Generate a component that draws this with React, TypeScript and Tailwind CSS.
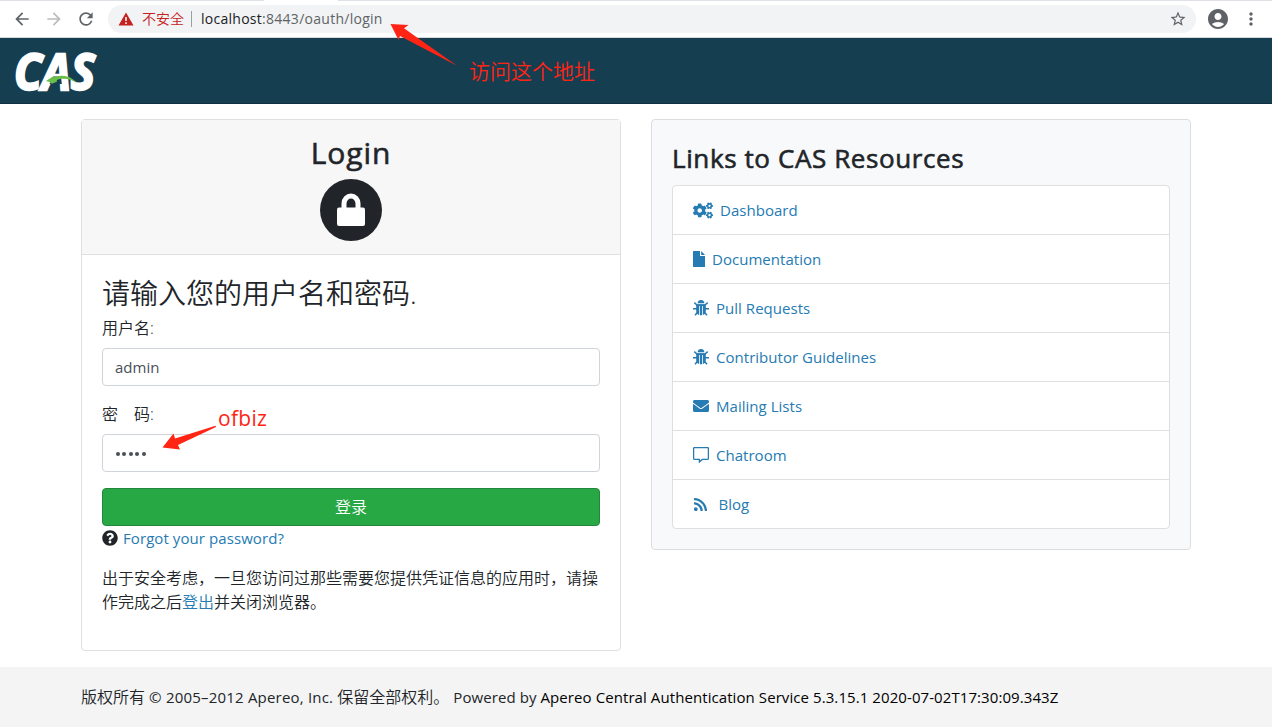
import type { ReactNode } from "react";
import { FaCogs, FaEnvelope, FaQuestionCircle, FaRss } from "react-icons/fa";
import { MdAccountCircle, MdArrowBack, MdArrowForward, MdMoreVert, MdRefresh, MdStarBorder } from "react-icons/md";

function FileIcon() {
  return (
    <svg width="12" height="16" viewBox="0 0 12 16" fill="currentColor">
      <path d="M0 .6Q0 0 .6 0H7v4.400q0 .6.6.6H12v10.400q0 .6-.6.6H.6Q0 16 0 15.400zM8.200 0l3.800 4H8.200z" />
    </svg>
  );
}

function BugIcon() {
  return (
    <svg width="16" height="16" viewBox="0 0 16 16">
      <path d="M4.600 3.200Q5 0 8 0t3.400 3.200z" fill="currentColor" />
      <path
        d="M1.300 2.600L4 5h8l2.700-2.400M0 8.700h16M2 15.300l2.600-3M14 15.300l-2.600-3"
        fill="none"
        stroke="currentColor"
        strokeWidth="1.500"
      />
      <path d="M3.200 4.400h9.600V11q0 4-4.100 4.200H7.300Q3.200 15 3.200 11z" fill="currentColor" />
      <path d="M6.500 6v9M9.500 6v9" stroke="#fff" strokeWidth=".8" />
    </svg>
  );
}

function ChatIcon() {
  return (
    <svg width="16" height="16" viewBox="0 0 16 16" fill="none" stroke="currentColor" strokeWidth="1.300">
      <path d="M1.600.6h12.800q1 0 1 1v9.800q0 1-1 1H9.200L6.400 15v-2.600H1.600q-1 0-1-1V1.600q0-1 1-1z" />
    </svg>
  );
}

function CasLogo() {
  return (
    <svg width="110" height="66" viewBox="0 0 110 66" className="block overflow-visible">
      <text
        x="14"
        y="51.500"
        textLength="81"
        lengthAdjust="spacingAndGlyphs"
        fill="#fff"
        stroke="#fff"
        strokeWidth="2.400"
        className="font-['Open_Sans',sans-serif] text-[50px] font-bold italic"
      >
        CAS
      </text>
      <path d="M54 38.500h7l.8 7.500H49.500z" fill="#153e50" />
      <path d="M46 43l8-5.200.6 1.400q13-4.500 22.500 6-10-6.500-20.500-3.300l.6 1.600-5.200 2.200q-2-2-6-2.700z" fill="#6abf4b" />
    </svg>
  );
}

const links: { label: string; icon: ReactNode; gap: string }[] = [
  { label: "Dashboard", icon: <FaCogs className="h-[17px] w-[20px]" />, gap: "gap-[7px]" },
  { label: "Documentation", icon: <FileIcon />, gap: "gap-[7px]" },
  { label: "Pull Requests", icon: <BugIcon />, gap: "gap-[7px]" },
  { label: "Contributor Guidelines", icon: <BugIcon />, gap: "gap-[7px]" },
  { label: "Mailing Lists", icon: <FaEnvelope className="size-4" />, gap: "gap-[7px]" },
  { label: "Chatroom", icon: <ChatIcon />, gap: "gap-[7px]" },
  { label: "Blog", icon: <FaRss className="size-[15px]" />, gap: "gap-[10.500px]" },
];

function BrowserBar() {
  return (
    <div className="flex h-[38px] flex-col border-b border-[#d5d8dc] bg-white">
      <div className="flex h-px justify-between">
        <div className="w-[264px] bg-[#dee1e6]" />
        <div className="w-[934px] bg-[#dee1e6]" />
      </div>
      <div className="flex flex-1 items-center">
        <div className="flex w-[108px] items-center gap-3 pl-3 text-[#5f6368]">
          <MdArrowBack className="size-5" />
          <MdArrowForward className="size-5 text-[#babcbe]" />
          <MdRefresh className="size-5" />
        </div>
        <div className="flex h-7 w-[1088px] items-center rounded-full bg-[#f1f3f4] pr-[9px] pl-[10px]">
          <svg width="16" height="14" viewBox="0 0 16 14">
            <path d="M8 .5L15.500 13.500H.5z" fill="#c5221f" />
            <path d="M8 5v4M8 10.300v1.700" stroke="#fff" strokeWidth="1.500" />
          </svg>
          <span className="ml-2 text-[14px] leading-5 font-[350] text-[#c5221f]">不安全</span>
          <span className="ml-[7px] h-4 w-px bg-[#9aa0a6]" />
          <span className="ml-[9px] font-['Open_Sans',sans-serif] text-[14px] leading-5 tracking-[0.270px] text-[#202124]">
            localhost<span className="text-[#5f6368]">:8443/oauth/login</span>
          </span>
          <MdStarBorder className="ml-auto size-[18px] text-[#5f6368]" />
        </div>
        <MdAccountCircle className="ml-[10px] size-6 text-[#5f6368]" />
        <MdMoreVert className="ml-[11px] size-5 text-[#5f6368]" />
      </div>
    </div>
  );
}

function LoginCard() {
  return (
    <section className="h-[532px] w-[540px] rounded border border-[#dfdfdf] bg-white">
      <header className="flex h-[135px] flex-col items-center border-b border-[#dfdfdf] bg-[#f7f7f7] pt-[13px]">
        <h2 className="h-[38px] text-[30px] leading-[40px] font-medium tracking-[0.900px] [-webkit-text-stroke:0.6px_#212529]">
          Login
        </h2>
        <svg width="62" height="62" viewBox="0 0 62 62" className="mt-2">
          <circle cx="31" cy="31" r="31" fill="#212529" />
          <rect x="17" y="28.500" width="28" height="18.500" rx="2" fill="#fff" />
          <path d="M24 29v-4.500a7 7.500 0 0 1 14 0V29" fill="none" stroke="#fff" strokeWidth="5" />
        </svg>
      </header>
      <div className="flex flex-col px-5 pt-5">
        <h3 className="mb-2 h-[33px] text-[28px] leading-[37px] font-[350]">请输入您的用户名和密码.</h3>
        <label className="mb-2 h-6 leading-6 font-[350]">用户名:</label>
        <div className="mb-4 flex h-[38px] items-center rounded border border-[#ced4da] px-3 text-[15px] text-[#495057]">admin</div>
        <label className="mb-2 h-6 leading-6 font-[350] whitespace-pre">密{"\u3000"}码:</label>
        <div className="mb-4 flex h-[38px] items-center gap-[2.400px] rounded border border-[#ced4da] px-[13px]">
          {[0, 1, 2, 3, 4].map((i) => (
            <span key={i} className="mt-px size-1 rounded-full bg-[#495057]" />
          ))}
        </div>
        <button className="h-[38px] rounded border border-[#22873b] bg-[#28a745] text-[16px] font-[350] text-white">登录</button>
        <div className="flex h-6 items-center gap-[5px]">
          <FaQuestionCircle className="size-4" />
          <a className="text-[15px] tracking-[0.080px] text-[#257bb2]">Forgot your password?</a>
        </div>
        <p className="mt-4 leading-6 font-[350] whitespace-nowrap">
          出于安全考虑，一旦您访问过那些需要您提供凭证信息的应用时，请操
          <br />
          作完成之后<a className="text-[#257bb2]">登出</a>并关闭浏览器。
        </p>
      </div>
    </section>
  );
}

function ResourcesCard() {
  return (
    <section className="h-[431px] w-[540px] rounded border border-[#dcdddf] bg-[#f8f9fa] px-5 pt-5">
      <h3 className="mb-2 h-[37px] text-[26px] leading-[37px] font-medium tracking-[0.600px] whitespace-nowrap [-webkit-text-stroke:0.6px_#212529]">
        Links to CAS Resources
      </h3>
      <ul className="h-[344px] divide-y divide-[#dfdfdf] rounded border border-[#dfdfdf] bg-white">
        {links.map(({ label, icon, gap }) => (
          <li
            key={label}
            className={`flex h-[49px] items-center px-5 text-[15px] tracking-[0.030px] text-[#257bb2] last:h-12 ${gap}`}
          >
            {icon}
            <a>{label}</a>
          </li>
        ))}
      </ul>
    </section>
  );
}

export default function App() {
  return (
    <div className="relative flex h-[727px] w-[1272px] flex-col overflow-hidden bg-white font-['Open_Sans','Noto_Sans_CJK_SC',sans-serif] text-[16px] text-[#212529]">
      <BrowserBar />
      <nav className="flex h-[66px] items-center border-b border-[#12303f] bg-[#153e50]">
        <CasLogo />
      </nav>
      <main className="flex h-[563px] items-start gap-[30px] pt-[15px] pl-[81px]">
        <LoginCard />
        <ResourcesCard />
      </main>
      <footer className="flex flex-1 items-center bg-[#f4f4f4] pl-[81px] text-[15px] whitespace-pre">
        <span className="text-[16px] font-[350]">版权所有</span>
        <span className="tracking-[0.200px]"> © 2005–2012 Apereo, Inc. </span>
        <span className="text-[16px] font-[350]">保留全部权利。</span>
        <span className="tracking-[0.080px]"> Powered by </span>
        <span className="tracking-[0.080px] text-black">
          Apereo Central Authentication Service 5.3.15.1 2020-07-02T17:30:09.343Z
        </span>
      </footer>
      <svg width="68" height="44" viewBox="0 0 68 44" className="absolute top-[23px] left-[390px]">
        <path d="M.5 1L18.500 2 14 5.200 67 42.800 10 13 8.500 17z" fill="#ff2414" />
      </svg>
      <span className="absolute top-[56px] left-[469px] text-[21px] leading-[30px] font-[350] text-[#ff2414]">访问这个地址</span>
      <svg width="56" height="26" viewBox="0 0 56 26" className="absolute top-[425px] left-[162px]">
        <path d="M.5 22.500L11.500 8.500 13 13.500 53.500.8 54 2 16 20 18 24.500z" fill="#ff2414" />
      </svg>
      <span className="absolute top-[403px] left-[218px] text-[21px] leading-[30px] tracking-[0.300px] text-[#ff2414]">ofbiz</span>
    </div>
  );
}
